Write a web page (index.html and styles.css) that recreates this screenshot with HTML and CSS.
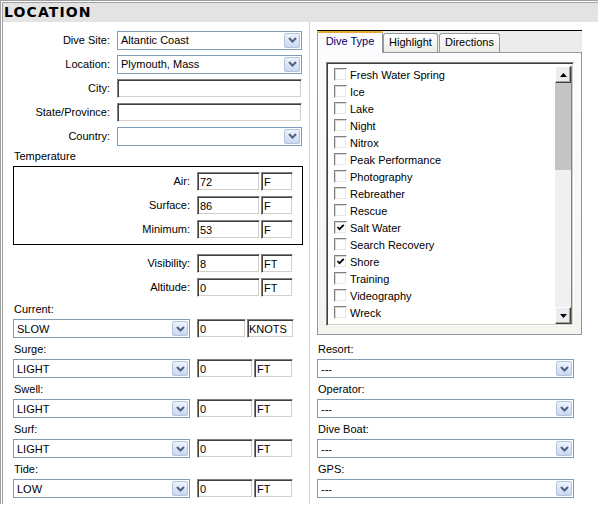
FILE: index.html
```html
<!DOCTYPE html>
<html lang="en">

<head>
    <meta charset="UTF-8">
    <title>Location</title>
    <link rel="stylesheet" href="styles.css">
</head>

<body>
    <div class="panel">
        <div class="panel-inner">
            <div class="panel-head">LOCATION</div>
            <div class="panel-body">

                <!-- left column -->
                <div class="col-left">
                    <div class="row">
                        <span class="lbl">Dive Site:</span>
                        <div class="combo w-main"><span class="combo-text">Altantic Coast</span><span class="combo-btn"><svg width="9" height="6" viewBox="0 0 9 6"><path d="M1 1 L4.5 4.5 L8 1" fill="none" stroke="#4d6185" stroke-width="2"/></svg></span></div>
                    </div>
                    <div class="row">
                        <span class="lbl">Location:</span>
                        <div class="combo w-main"><span class="combo-text">Plymouth, Mass</span><span class="combo-btn"><svg width="9" height="6" viewBox="0 0 9 6"><path d="M1 1 L4.5 4.5 L8 1" fill="none" stroke="#4d6185" stroke-width="2"/></svg></span></div>
                    </div>
                    <div class="row">
                        <span class="lbl">City:</span>
                        <div class="field w-main"></div>
                    </div>
                    <div class="row">
                        <span class="lbl">State/Province:</span>
                        <div class="field w-main"></div>
                    </div>
                    <div class="row">
                        <span class="lbl">Country:</span>
                        <div class="combo w-main"><span class="combo-text"></span><span class="combo-btn"><svg width="9" height="6" viewBox="0 0 9 6"><path d="M1 1 L4.5 4.5 L8 1" fill="none" stroke="#4d6185" stroke-width="2"/></svg></span></div>
                    </div>

                    <div class="temp-title">Temperature</div>
                    <div class="temp-box">
                        <div class="row">
                            <span class="lbl lbl-in">Air:</span>
                            <div class="field w-num">72</div>
                            <div class="field w-unit">F</div>
                        </div>
                        <div class="row">
                            <span class="lbl lbl-in">Surface:</span>
                            <div class="field w-num">86</div>
                            <div class="field w-unit">F</div>
                        </div>
                        <div class="row">
                            <span class="lbl lbl-in">Minimum:</span>
                            <div class="field w-num">53</div>
                            <div class="field w-unit">F</div>
                        </div>
                    </div>

                    <div class="rows-out">
                        <div class="row">
                            <span class="lbl lbl-out">Visibility:</span>
                            <div class="field w-num">8</div>
                            <div class="field w-unit">FT</div>
                        </div>
                        <div class="row">
                            <span class="lbl lbl-out">Altitude:</span>
                            <div class="field w-num">0</div>
                            <div class="field w-unit">FT</div>
                        </div>
                    </div>

                    <div class="grp-label">Current:</div>
                    <div class="grp-row">
                        <div class="combo w-cond"><span class="combo-text">SLOW</span><span class="combo-btn"><svg width="9" height="6" viewBox="0 0 9 6"><path d="M1 1 L4.5 4.5 L8 1" fill="none" stroke="#4d6185" stroke-width="2"/></svg></span></div>
                        <div class="field w-speed">0</div>
                        <div class="field w-knots">KNOTS</div>
                    </div>
                    <div class="grp-label">Surge:</div>
                    <div class="grp-row">
                        <div class="combo w-cond"><span class="combo-text">LIGHT</span><span class="combo-btn"><svg width="9" height="6" viewBox="0 0 9 6"><path d="M1 1 L4.5 4.5 L8 1" fill="none" stroke="#4d6185" stroke-width="2"/></svg></span></div>
                        <div class="field w-height">0</div>
                        <div class="field w-ft">FT</div>
                    </div>
                    <div class="grp-label">Swell:</div>
                    <div class="grp-row">
                        <div class="combo w-cond"><span class="combo-text">LIGHT</span><span class="combo-btn"><svg width="9" height="6" viewBox="0 0 9 6"><path d="M1 1 L4.5 4.5 L8 1" fill="none" stroke="#4d6185" stroke-width="2"/></svg></span></div>
                        <div class="field w-height">0</div>
                        <div class="field w-ft">FT</div>
                    </div>
                    <div class="grp-label">Surf:</div>
                    <div class="grp-row">
                        <div class="combo w-cond"><span class="combo-text">LIGHT</span><span class="combo-btn"><svg width="9" height="6" viewBox="0 0 9 6"><path d="M1 1 L4.5 4.5 L8 1" fill="none" stroke="#4d6185" stroke-width="2"/></svg></span></div>
                        <div class="field w-height">0</div>
                        <div class="field w-ft">FT</div>
                    </div>
                    <div class="grp-label">Tide:</div>
                    <div class="grp-row">
                        <div class="combo w-cond"><span class="combo-text">LOW</span><span class="combo-btn"><svg width="9" height="6" viewBox="0 0 9 6"><path d="M1 1 L4.5 4.5 L8 1" fill="none" stroke="#4d6185" stroke-width="2"/></svg></span></div>
                        <div class="field w-height">0</div>
                        <div class="field w-ft">FT</div>
                    </div>
                </div>

                <!-- right column -->
                <div class="col-right">
                    <div class="tabctl">
                        <div class="tabs">
                            <div class="tab tab-active">Dive Type</div>
                            <div class="tab tab-hl">Highlight</div>
                            <div class="tab tab-dir">Directions</div>
                        </div>
                        <div class="tab-page">
                            <div class="checklist">
                                <div class="items">
                                    <div class="item"><span class="cb"></span>Fresh Water Spring</div>
                                    <div class="item"><span class="cb"></span>Ice</div>
                                    <div class="item"><span class="cb"></span>Lake</div>
                                    <div class="item"><span class="cb"></span>Night</div>
                                    <div class="item"><span class="cb"></span>Nitrox</div>
                                    <div class="item"><span class="cb"></span>Peak Performance</div>
                                    <div class="item"><span class="cb"></span>Photography</div>
                                    <div class="item"><span class="cb"></span>Rebreather</div>
                                    <div class="item"><span class="cb"></span>Rescue</div>
                                    <div class="item"><span class="cb"><svg width="9" height="9" viewBox="0 0 9 9"><path d="M1.5 4 L3.5 6.2 L7.8 1.8" fill="none" stroke="#000" stroke-width="1.7"/></svg></span>Salt Water</div>
                                    <div class="item"><span class="cb"></span>Search Recovery</div>
                                    <div class="item"><span class="cb"><svg width="9" height="9" viewBox="0 0 9 9"><path d="M1.5 4 L3.5 6.2 L7.8 1.8" fill="none" stroke="#000" stroke-width="1.7"/></svg></span>Shore</div>
                                    <div class="item"><span class="cb"></span>Training</div>
                                    <div class="item"><span class="cb"></span>Videography</div>
                                    <div class="item"><span class="cb"></span>Wreck</div>
                                </div>
                                <div class="scrollbar">
                                    <div class="sb-btn"><svg width="7" height="4" viewBox="0 0 7 4"><path d="M0 4 L3.5 0 L7 4 Z" fill="#000"/></svg></div>
                                    <div class="sb-thumb"></div>
                                    <div class="sb-track"></div>
                                    <div class="sb-btn"><svg width="7" height="4" viewBox="0 0 7 4"><path d="M0 0 L3.5 4 L7 0 Z" fill="#000"/></svg></div>
                                </div>
                            </div>
                        </div>
                    </div>

                    <div class="grp-label">Resort:</div>
                    <div class="grp-row">
                        <div class="combo w-side"><span class="combo-text">---</span><span class="combo-btn"><svg width="9" height="6" viewBox="0 0 9 6"><path d="M1 1 L4.5 4.5 L8 1" fill="none" stroke="#4d6185" stroke-width="2"/></svg></span></div>
                    </div>
                    <div class="grp-label">Operator:</div>
                    <div class="grp-row">
                        <div class="combo w-side"><span class="combo-text">---</span><span class="combo-btn"><svg width="9" height="6" viewBox="0 0 9 6"><path d="M1 1 L4.5 4.5 L8 1" fill="none" stroke="#4d6185" stroke-width="2"/></svg></span></div>
                    </div>
                    <div class="grp-label">Dive Boat:</div>
                    <div class="grp-row">
                        <div class="combo w-side"><span class="combo-text">---</span><span class="combo-btn"><svg width="9" height="6" viewBox="0 0 9 6"><path d="M1 1 L4.5 4.5 L8 1" fill="none" stroke="#4d6185" stroke-width="2"/></svg></span></div>
                    </div>
                    <div class="grp-label">GPS:</div>
                    <div class="grp-row">
                        <div class="combo w-side"><span class="combo-text">---</span><span class="combo-btn"><svg width="9" height="6" viewBox="0 0 9 6"><path d="M1 1 L4.5 4.5 L8 1" fill="none" stroke="#4d6185" stroke-width="2"/></svg></span></div>
                    </div>
                </div>

            </div>
        </div>
    </div>
</body>

</html>
```

FILE: styles.css
```css
* {
    box-sizing: border-box;
}

body {
    margin: 0;
    background-color: #fff;
    font-family: "Liberation Sans", Arial, sans-serif;
    font-size: 11px;
    color: #000;
}

/* outer frame */
.panel {
    width: 598px;
    height: 504px;
    border-top: 1px solid #a0a0a0;
    border-left: 1px solid #a0a0a0;
}

.panel-inner {
    height: 100%;
    border-top: 1px solid #fff;
    border-left: 1px solid #fff;
    display: flex;
    flex-direction: column;
}

.panel-head {
    height: 20px;
    border-top: 1px solid #a0a0a0;
    border-left: 1px solid #a0a0a0;
    background-color: #e3e3e3;
    padding-left: 1px;
    font-family: "DejaVu Sans", sans-serif;
    font-weight: bold;
    font-size: 14px;
    letter-spacing: 1.1px;
    line-height: 19px;
}

.panel-body {
    flex: 1;
    display: flex;
    border-left: 1px solid #a0a0a0;
}

.col-left {
    width: 307px;
    padding: 6px 0 0 10px;
    border-right: 1px solid #d0d0d0;
}

.col-right {
    flex: 1;
    padding: 8px 0 0 7px;
}

.row {
    display: flex;
    align-items: center;
    height: 24px;
}

.lbl {
    width: 104px;
    padding-right: 7px;
    text-align: right;
    white-space: nowrap;
}

.lbl-in {
    width: 183px;
}

.lbl-out {
    width: 184px;
}

/* combo box */
.combo {
    height: 19px;
    border: 1px solid #7f9db9;
    background-color: #fff;
    display: flex;
    align-items: center;
    padding: 0 1px 0 3px;
}

.combo-text {
    flex: 1;
    white-space: nowrap;
}

.combo-btn {
    width: 16px;
    height: 15px;
    border: 1px solid #b3c2de;
    border-radius: 2px;
    background: linear-gradient(#eef3fd, #c9d7f2);
    display: flex;
    align-items: center;
    justify-content: center;
}

/* sunken text field */
.field {
    height: 19px;
    border: 1px solid;
    border-color: #808080 #fff #fff #808080;
    box-shadow: inset 1px 1px 0 #404040, inset -1px -1px 0 #d4d0c8;
    background-color: #fff;
    padding: 2px 0 0 2px;
    line-height: 14px;
    white-space: nowrap;
    overflow: hidden;
}

.w-main {
    width: 185px;
}

.w-num {
    width: 63px;
    margin-right: 1px;
}

.w-unit {
    width: 32px;
}

.temp-title {
    margin-top: 1px;
    height: 14px;
    line-height: 14px;
    margin-bottom: 3px;
    padding-left: 1px;
}

.temp-box {
    width: 290px;
    border: 1px solid #000;
    padding: 2px 0 3px;
}

.rows-out {
    margin-top: 6px;
}

/* label above a control */
.grp-label {
    height: 20px;
    padding: 3px 0 0 1px;
    line-height: 14px;
}

.grp-row {
    display: flex;
    margin-bottom: 1px;
}

.w-cond {
    width: 177px;
    margin-right: 7px;
}

.w-speed {
    width: 49px;
    margin-right: 1px;
}

.w-knots {
    width: 47px;
    padding-left: 1px;
}

.w-height {
    width: 56px;
    margin-right: 1px;
}

.w-ft {
    width: 39px;
}

.w-side {
    width: 257px;
}

/* tab control */
.tabctl {
    width: 265px;
    margin-bottom: 4px;
}

.tabs {
    height: 22px;
    border-top: 1px solid #000;
    background-color: #ececec;
    display: flex;
    align-items: flex-end;
}

.tab {
    height: 19px;
    border: 1px solid #919b9c;
    border-bottom: none;
    border-radius: 3px 3px 0 0;
    background: linear-gradient(#fff, #ecebe5);
    text-align: center;
    line-height: 17px;
}

.tab-active {
    position: relative;
    z-index: 1;
    width: 66px;
    height: 22px;
    margin-bottom: -1px;
    border-top: 2px solid #e9a53a;
    border-radius: 2px 2px 0 0;
    background: #fcfcfe;
    color: #00006a;
    line-height: 17px;
}

.tab-hl {
    width: 55px;
}

.tab-dir {
    width: 61px;
    margin-left: 1px;
}

.tab-page {
    height: 283px;
    border: 1px solid #919b9c;
    background: linear-gradient(#fcfcfe, #f4f3ee);
    padding: 9px 0 0 8px;
}

.checklist {
    width: 248px;
    height: 264px;
    border: 1px solid;
    border-color: #808080 #fff #fff #808080;
    box-shadow: inset 1px 1px 0 #404040, inset -1px -1px 0 #d4d0c8;
    background-color: #fff;
    display: flex;
    padding: 1px;
}

.items {
    flex: 1;
    padding: 2px 0 0 6px;
}

.item {
    height: 17px;
    display: flex;
    align-items: center;
    white-space: nowrap;
}

.cb {
    width: 13px;
    height: 13px;
    margin-right: 3px;
    border: 1px solid;
    border-color: #808080 #fff #fff #808080;
    box-shadow: inset 1px 1px 0 #d8d8d8, inset -1px -1px 0 #e8e8e8;
    background-color: #fff;
    display: flex;
    align-items: center;
    justify-content: center;
}

.scrollbar {
    width: 17px;
    margin-top: 2px;
    display: flex;
    flex-direction: column;
    background-color: #f0f0f0;
    border-right: 1px solid #808080;
}

.sb-btn {
    height: 17px;
    border: 1px solid;
    border-color: #fff #404040 #404040 #fff;
    box-shadow: inset -1px -1px 0 #a0a0a0;
    background-color: #ececec;
    display: flex;
    align-items: center;
    justify-content: center;
}

.sb-thumb {
    height: 87px;
    background-color: #c4c4c4;
}

.sb-track {
    flex: 1;
}
```
